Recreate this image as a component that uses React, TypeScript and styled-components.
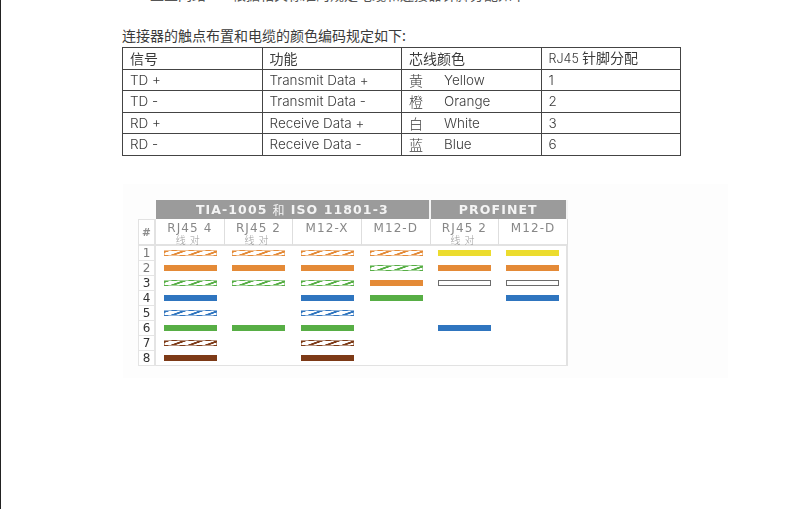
import React from "react";
import styled, { createGlobalStyle } from "styled-components";

const GlobalStyle = createGlobalStyle`
  html, body {
    margin: 0;
    height: 100%;
    overflow: hidden;
    background: #ffffff;
  }
`;

const Page = styled.div`
  width: 790px;
  height: 509px;
  box-sizing: border-box;
  border-left: 1px solid #222;
  padding-left: 121px;
  overflow: hidden;
  font-family: "Noto Sans CJK SC", "Noto Sans", sans-serif;
  font-size: 14px;
  color: #3a3a3a;
`;

const ClippedLine = styled.p`
  margin: -16px 0 0 28px;
  line-height: 20px;
  white-space: nowrap;
  display: flex;
  gap: 26px;
  color: #555;
`;

const Caption = styled.p`
  margin: 21px 0 2px;
  line-height: 20px;
  white-space: nowrap;
`;

const SpecTable = styled.table`
  width: 559px;
  border-collapse: collapse;
  table-layout: fixed;
  filter: blur(0.25px);

  td {
    height: 21.5px;
    padding: 0 0 0 7px;
    border: 1px solid #444;
    line-height: 16px;
    white-space: nowrap;
    box-sizing: border-box;
  }
`;

const LatinCell = styled.td`
  font-family: "Inter", "Noto Sans CJK SC", sans-serif;
  font-weight: 300;
  font-size: 13.5px;
`;

const PinHeadLatin = styled.span`
  font-family: "Inter", sans-serif;
  font-weight: 300;
  font-size: 12.5px;
`;

const ColorName = styled.span`
  display: inline-block;
  width: 35px;
  font-family: "Noto Sans CJK SC", sans-serif;
  font-size: 14px;
  line-height: 16px;
  vertical-align: top;
`;

const Figure = styled.div`
  width: 605px;
  height: 194px;
  box-sizing: border-box;
  margin: 28px 0 0 1px;
  padding: 16px 0 0 15px;
  background: #fdfdfd;
  filter: blur(0.4px);
`;

const WireGrid = styled.div`
  width: 430px;
  display: grid;
  grid-template-columns: 18px repeat(6, 68.67px);
  grid-template-rows: 19px 27px repeat(8, 15.07px);
  background: #ffffff;
  font-family: "DejaVu Sans", sans-serif;
`;

const Corner = styled.div`
  background: #fdfdfd;
`;

const GroupHeader = styled.div<{ $span: number }>`
  grid-column: span ${(p) => p.$span};
  display: flex;
  align-items: center;
  justify-content: center;
  gap: 5px;
  background: #9b9b9b;
  color: #f4f4f4;
  font-size: 12.5px;
  font-weight: 700;
  letter-spacing: 1.1px;
  border-right: 2px solid #f4f4f4;
  white-space: nowrap;

  &:last-of-type {
    border-right: none;
  }
`;

const ThinGlyph = styled.span`
  font-family: "Noto Sans CJK SC", sans-serif;
  font-weight: 400;
  font-size: 12px;
`;

const HashCell = styled.div`
  display: flex;
  align-items: center;
  justify-content: center;
  border: 1px solid #e2e2e2;
  border-width: 1px 2px 2px 1px;
  color: #8c8c8c;
  font-size: 10.5px;
  font-weight: 700;
`;

const SubHeader = styled.div`
  display: flex;
  flex-direction: column;
  align-items: center;
  border-right: 1px solid #dedede;
  border-bottom: 2px solid #e2e2e2;
  padding-top: 2px;
  color: #888;
  font-size: 12px;
  letter-spacing: 1.1px;
  line-height: 14px;
  white-space: nowrap;

  &:last-of-type {
    border-right: 2px solid #e0e0e0;
  }
`;

const PairNote = styled.span`
  font-family: "Noto Sans CJK SC", sans-serif;
  font-weight: 300;
  font-size: 10px;
  letter-spacing: 4px;
  line-height: 9px;
  color: #999;
`;

const PinCell = styled.div<{ $dark: boolean }>`
  display: flex;
  align-items: center;
  justify-content: center;
  border: 1px solid #e4e4e4;
  border-width: 0 2px 1px 1px;
  color: ${(p) => (p.$dark ? "#333" : "#777")};
  font-size: 12px;
  font-weight: 400;
`;

const WireCell = styled.div<{ $edge: boolean; $last: boolean }>`
  display: flex;
  align-items: center;
  justify-content: center;
  border-right: ${(p) => (p.$edge ? "2px solid #e2e2e2" : "none")};
  border-bottom: ${(p) => (p.$last ? "1px solid #e2e2e2" : "none")};
`;

const COLORS: Record<string, string> = {
  o: "#e48a37",
  g: "#57ae45",
  b: "#2f75bf",
  n: "#7d3a17",
  y: "#ecdc2e",
};

const Wire = styled.div<{ $color: string }>`
  width: 53px;
  height: 6px;
  background: ${(p) => p.$color};
`;

const StripedWire = styled.div<{ $color: string }>`
  width: 53px;
  height: 6px;
  box-sizing: border-box;
  border: 1px solid ${(p) => p.$color}88;
  background: repeating-linear-gradient(
    160deg,
    ${(p) => p.$color} 0 1.3px,
    #ffffff 1.9px 5.2px,
    ${(p) => p.$color} 5.8px
  );
`;

const WhiteWire = styled.div`
  width: 53px;
  height: 6px;
  box-sizing: border-box;
  border: 1px solid #6c6c6c;
  background: #ffffff;
`;

const specRows = [
  ["TD +", "Transmit Data +", "黄", "Yellow", "1"],
  ["TD -", "Transmit Data -", "橙", "Orange", "2"],
  ["RD +", "Receive Data +", "白", "White", "3"],
  ["RD -", "Receive Data -", "蓝", "Blue", "6"],
];

// one entry per pin, one letter per connector; capitals are striped pairs
const pins = [
  ["O", "O", "O", "O", "y", "y"],
  ["o", "o", "o", "G", "o", "o"],
  ["G", "G", "G", "o", "w", "w"],
  ["b", "", "b", "g", "", "b"],
  ["B", "", "B", "", "", ""],
  ["g", "g", "g", "", "b", ""],
  ["N", "", "N", "", "", ""],
  ["n", "", "n", "", "", ""],
];

const connectors = [
  { name: "RJ45 4", pair: true },
  { name: "RJ45 2", pair: true },
  { name: "M12-X", pair: false },
  { name: "M12-D", pair: false },
  { name: "RJ45 2", pair: true },
  { name: "M12-D", pair: false },
];

const renderWire = (code: string) => {
  if (!code) return null;
  if (code === "w") return <WhiteWire />;
  const color = COLORS[code.toLowerCase()];
  return code === code.toUpperCase() ? (
    <StripedWire $color={color} />
  ) : (
    <Wire $color={color} />
  );
};

const App = () => {
  return (
    <Page>
      <GlobalStyle />
      <ClippedLine>
        <span>工业网络</span>
        <span>根据相关标准的规定电缆和连接器针脚分配如下</span>
      </ClippedLine>
      <Caption>连接器的触点布置和电缆的颜色编码规定如下:</Caption>
      <SpecTable>
        <tbody>
          <tr>
            <td>信号</td>
            <td>功能</td>
            <td>芯线颜色</td>
            <td>
              <PinHeadLatin>RJ45</PinHeadLatin> 针脚分配
            </td>
          </tr>
          {specRows.map((row) => (
            <tr key={row[0]}>
              <LatinCell>{row[0]}</LatinCell>
              <LatinCell>{row[1]}</LatinCell>
              <LatinCell>
                <ColorName>{row[2]}</ColorName>
                {row[3]}
              </LatinCell>
              <LatinCell>{row[4]}</LatinCell>
            </tr>
          ))}
        </tbody>
      </SpecTable>
      <Figure>
        <WireGrid>
          <Corner />
          <GroupHeader $span={4}>
            TIA-1005 <ThinGlyph>和</ThinGlyph> ISO 11801-3
          </GroupHeader>
          <GroupHeader $span={2}>PROFINET</GroupHeader>
          <HashCell>#</HashCell>
          {connectors.map((c, i) => (
            <SubHeader key={i}>
              {c.name}
              {c.pair && <PairNote>线对</PairNote>}
            </SubHeader>
          ))}
          {pins.map((row, r) => (
            <React.Fragment key={r}>
              <PinCell $dark={r > 1}>{r + 1}</PinCell>
              {row.map((code, c) => (
                <WireCell key={c} $edge={c === 5} $last={r === 7}>
                  {renderWire(code)}
                </WireCell>
              ))}
            </React.Fragment>
          ))}
        </WireGrid>
      </Figure>
    </Page>
  );
};

export default App;
